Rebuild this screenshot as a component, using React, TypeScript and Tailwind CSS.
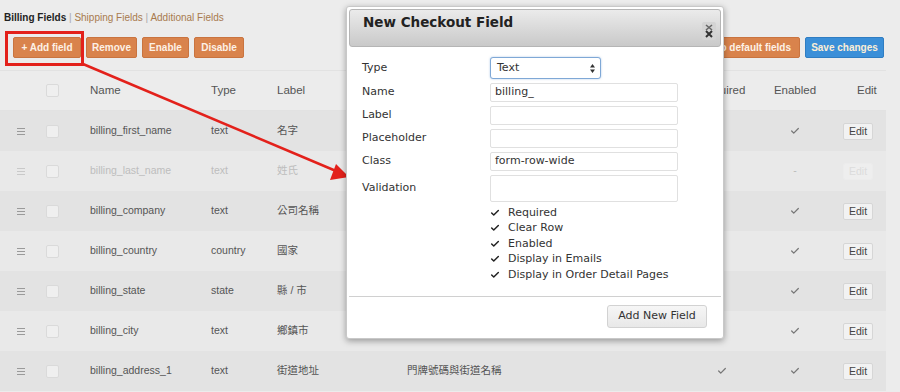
import { Check } from "lucide-react";

type Row = {
  name: string;
  type: string;
  label: string;
  placeholder?: string;
  required?: boolean;
  disabled?: boolean;
};

const rows: Row[] = [
  { name: "billing_first_name", type: "text", label: "名字" },
  { name: "billing_last_name", type: "text", label: "姓氏", disabled: true },
  { name: "billing_company", type: "text", label: "公司名稱" },
  { name: "billing_country", type: "country", label: "國家" },
  { name: "billing_state", type: "state", label: "縣 / 市" },
  { name: "billing_city", type: "text", label: "鄉鎮市" },
  { name: "billing_address_1", type: "text", label: "街道地址", placeholder: "門牌號碼與街道名稱", required: true },
];

const sans = "font-['Liberation_Sans','Noto_Sans_CJK_TC',sans-serif]";
const dv = "font-['DejaVu_Sans',sans-serif]";

function DragIcon({ faded }: { faded?: boolean }) {
  return (
    <div className={`flex flex-col gap-[2px] w-[8px] ${faded ? "opacity-40" : ""}`}>
      <span className="h-px bg-[#9a9a9a]" />
      <span className="h-px bg-[#9a9a9a]" />
      <span className="h-px bg-[#9a9a9a]" />
    </div>
  );
}

function Tick() {
  return <Check className="w-[10px] h-[10px] text-[#777]" strokeWidth={3} />;
}

function FormField({ label, value, h = "h-[19px]" }: { label: string; value?: string; h?: string }) {
  return (
    <div className="flex items-center">
      <span className="w-[128px] text-[11px] text-[#333]">{label}</span>
      <div className={`w-[188px] ${h} border border-[#e0e0e0] rounded-[2px] px-[4px] text-[11px] text-[#333] flex items-center`}>
        {value}
      </div>
    </div>
  );
}

const orangeBtn = "h-[21px] rounded-[2px] bg-[#d9834c] border border-[#c97440] text-[10px] font-bold text-[#fdf1e6]";

const leftButtons = [
  { label: "+ Add field", w: "w-[68px]" },
  { label: "Remove", w: "w-[51px]" },
  { label: "Enable", w: "w-[47px]" },
  { label: "Disable", w: "w-[50px]" },
];

export default function App() {
  const checks = ["Required", "Clear Row", "Enabled", "Display in Emails", "Display in Order Detail Pages"];

  return (
    <div className={`relative w-[900px] h-[392px] overflow-hidden bg-[#ececec] ${sans}`}>
      {/* tabs */}
      <div className="pl-[4px] pt-[11px] h-[31px] text-[10px] leading-[13px]">
        <span className="font-bold text-[#222]">Billing Fields</span>
        <span className="text-[#aaa]"> | </span>
        <span className="text-[#a87a4e]">Shipping Fields</span>
        <span className="text-[#aaa]"> | </span>
        <span className="text-[#a87a4e]">Additional Fields</span>
      </div>

      {/* action buttons */}
      <div className="flex justify-between pl-[13px] pr-[16px] pt-[6px] h-[39px]">
        <div className="flex gap-[5px]">
          {leftButtons.map((b) => (
            <button key={b.label} className={`${orangeBtn} ${b.w}`}>
              {b.label}
            </button>
          ))}
        </div>
        <div className="flex gap-[5px]">
          <button className={`${orangeBtn} px-[8px]`}>Reset to default fields</button>
          <button className="h-[21px] w-[79px] rounded-[2px] bg-[#3b8fd8] border border-[#2f7dc2] text-[10px] font-bold text-[#fbeed6]">
            Save changes
          </button>
        </div>
      </div>

      {/* table */}
      <div className="border-t border-[#e2e2e2] mr-[14px]">
        <div className="flex items-center h-[40px] text-[11.5px] text-[#555] border-b border-[#e2e2e2]">
          <div className="w-[40px]" />
          <div className="w-[24px] flex justify-center">
            <span className="w-[13px] h-[13px] rounded-[2px] border border-[#dadada] bg-[#efefef]" />
          </div>
          <div className="w-[147px] pl-[26px]">Name</div>
          <div className="w-[66px]">Type</div>
          <div className="w-[130px]">Label</div>
          <div className="w-[290px]">Placeholder</div>
          <div className="w-[50px] text-center">Required</div>
          <div className="w-[96px] text-center">Enabled</div>
          <div className="w-[43px] pl-[14px]">Edit</div>
        </div>
        {rows.map((r, i) => (
          <div
            key={r.name}
            className={`flex items-center h-[40px] text-[10.5px] ${i % 2 === 0 ? "bg-[#e3e3e3]" : "bg-[#e9e9e9]"} ${r.disabled ? "text-[#bdbdbd]" : "text-[#555]"}`}
          >
            <div className="w-[40px] flex justify-center pl-[1px]">
              <DragIcon faded={r.disabled} />
            </div>
            <div className="w-[24px] flex justify-center">
              <span className="w-[13px] h-[13px] rounded-[2px] border border-[#dadada] bg-[#efefef]" />
            </div>
            <div className="w-[147px] pl-[26px]">{r.name}</div>
            <div className="w-[66px]">{r.type}</div>
            <div className="w-[130px]">{r.label}</div>
            <div className="w-[290px]">{r.placeholder}</div>
            <div className="w-[50px] flex justify-center">{r.required && <Tick />}</div>
            <div className="w-[96px] flex justify-center">
              {r.disabled ? <span className="text-[#bbb]">-</span> : <Tick />}
            </div>
            <div className="w-[43px]">
              <button
                className={`h-[17px] px-[5px] rounded-[2px] border text-[10.5px] ${r.disabled ? "border-[#ececec] bg-[#eeeeee] text-[#dcdcdc]" : "border-[#d6d6d6] bg-[#f2f2f2] text-[#444]"}`}
              >
                Edit
              </button>
            </div>
          </div>
        ))}
      </div>

      {/* annotation: red box + arrow */}
      <div className="absolute left-[5px] top-[31px] w-[79px] h-[35px] border-[3px] border-[#e3211b]" />
      <svg className="absolute left-0 top-0 pointer-events-none" width="900" height="392">
        <line x1="83" y1="64" x2="336" y2="171" stroke="#e3211b" strokeWidth="2.5" />
        <polygon points="349,177 330,180 336,164" fill="#e3211b" />
      </svg>

      {/* modal */}
      <div className={`absolute left-[346px] top-[6px] w-[378px] h-[333px] bg-white border border-[#c8c8c8] rounded-[3px] shadow-[0_2px_6px_rgba(0,0,0,0.35)] p-[2px] ${dv}`}>
        <div className="relative h-[38px] rounded-[3px] border border-[#b5b5b5] bg-gradient-to-b from-[#ebebeb] to-[#c9c9c9] pl-[13px] pt-[2px] leading-[20px]">
          <span className="text-[13.5px] font-bold text-[#222]">New Checkout Field</span>
          <svg className="absolute right-[4px] top-[12px]" width="14" height="18" viewBox="0 0 14 18">
            <rect x="0" y="0" width="14" height="18" rx="2" fill="#d4d4d4" />
            <path d="M4 3 L10 8 M10 3 L4 8" stroke="#666" strokeWidth="1.6" />
            <path d="M4 9 L10 15 M10 9 L4 15" stroke="#333" strokeWidth="2" />
          </svg>
        </div>

        <div className="pl-[13px] pt-[10px] flex flex-col gap-[4px]">
          <div className="flex items-center h-[22px]">
            <span className="w-[128px] text-[11px] text-[#333]">Type</span>
            <div className="w-[111px] h-[22px] rounded-[3px] border border-[#7fa8d6] shadow-[0_0_2px_rgba(80,140,210,0.5)] pl-[6px] pr-[5px] flex items-center justify-between text-[11px] text-[#333] bg-white">
              <span>Text</span>
              <svg width="5" height="9" viewBox="0 0 5 9">
                <path d="M2.5 0 L5 3.5 L0 3.5 Z M2.5 9 L5 5.5 L0 5.5 Z" fill="#333" />
              </svg>
            </div>
          </div>
          <FormField label="Name" value="billing_" />
          <FormField label="Label" />
          <FormField label="Placeholder" />
          <FormField label="Class" value="form-row-wide" />
          <FormField label="Validation" h="h-[27px]" />
          <div className="flex flex-col pl-[128px] mt-[-1px]">
            {checks.map((c) => (
              <div key={c} className="flex items-center h-[15.5px] gap-[8px] text-[11px] text-[#333]">
                <Check className="w-[10px] h-[10px] text-[#222]" strokeWidth={3.5} />
                <span>{c}</span>
              </div>
            ))}
          </div>
        </div>

        <div className="mt-[13px] border-t border-[#d0d0d0]" />
        <div className="flex justify-end pr-[14px] pt-[8px]">
          <button className="h-[23px] w-[100px] rounded-[3px] border border-[#d2d2d2] bg-gradient-to-b from-[#f6f6f6] to-[#e8e8e8] text-[11px] text-[#333]">
            Add New Field
          </button>
        </div>
      </div>
    </div>
  );
}
